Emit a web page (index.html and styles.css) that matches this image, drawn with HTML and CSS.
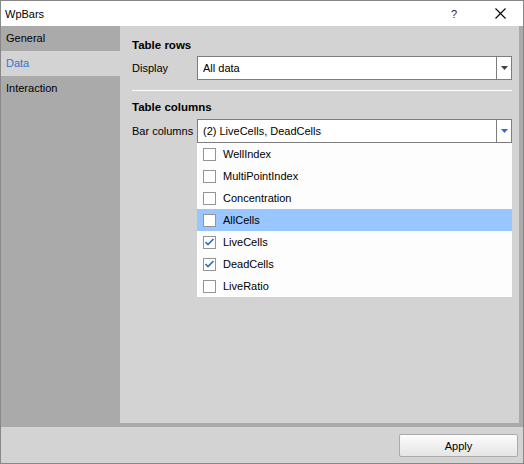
FILE: index.html
```html
<!DOCTYPE html>
<html>
<head>
<meta charset="utf-8">
<link rel="stylesheet" href="styles.css">
</head>
<body>
<div class="window">
  <div class="titlebar">
    <span class="title">WpBars</span>
    <span class="help">?</span>
    <span class="close">
      <svg width="11" height="11" viewBox="0 0 11 11"><path d="M0.5 0.5 L10.5 10.5 M10.5 0.5 L0.5 10.5" stroke="#000" stroke-width="1.1" fill="none"/></svg>
    </span>
  </div>
  <div class="body">
    <nav class="nav">
      <div class="nav-item">General</div>
      <div class="nav-item active">Data</div>
      <div class="nav-item">Interaction</div>
    </nav>
    <main class="content">
      <div class="heading">Table rows</div>
      <div class="row">
        <span class="label">Display</span>
        <div class="combo">
          <span class="combo-text">All data</span>
          <span class="combo-btn">
            <svg width="7" height="4" viewBox="0 0 7 4"><path d="M0 0 H7 L3.5 4 Z" fill="#404040"/></svg>
          </span>
        </div>
      </div>
      <div class="sep"></div>
      <div class="heading heading-cols">Table columns</div>
      <div class="row">
        <span class="label">Bar columns</span>
        <div class="combo">
          <span class="combo-text">(2) LiveCells, DeadCells</span>
          <span class="combo-btn">
            <svg width="7" height="4" viewBox="0 0 7 4"><path d="M0 0 H7 L3.5 4 Z" fill="#2d6fcc"/></svg>
          </span>
          <ul class="popup">
            <li class="opt"><span class="box"></span>WellIndex</li>
            <li class="opt"><span class="box"></span>MultiPointIndex</li>
            <li class="opt"><span class="box"></span>Concentration</li>
            <li class="opt hover"><span class="box"></span>AllCells</li>
            <li class="opt"><span class="box"><svg width="11" height="11" viewBox="0 0 11 11"><path d="M1.5 5 L4 7.5 L9.5 2" stroke="#2a6fcf" stroke-width="1.7" fill="none"/></svg></span>LiveCells</li>
            <li class="opt"><span class="box"><svg width="11" height="11" viewBox="0 0 11 11"><path d="M1.5 5 L4 7.5 L9.5 2" stroke="#2a6fcf" stroke-width="1.7" fill="none"/></svg></span>DeadCells</li>
            <li class="opt"><span class="box"></span>LiveRatio</li>
          </ul>
        </div>
      </div>
    </main>
  </div>
  <div class="footer">
    <button class="apply">Apply</button>
  </div>
</div>
</body>
</html>
```

FILE: styles.css
```css
* { box-sizing: border-box; }
html, body { margin: 0; padding: 0; }
body {
  font-family: "Liberation Sans", Arial, sans-serif;
  font-size: 11px;
  color: #000;
  background: #fff;
}
.window {
  width: 524px;
  height: 464px;
  border: 1px solid #888;
  display: flex;
  flex-direction: column;
}
.titlebar {
  height: 25px;
  background: #fff;
  display: flex;
  align-items: center;
  padding-left: 4px;
}
.title { font-size: 11px; flex: 1; }
.help {
  width: 30px;
  margin-right: 8px;
  text-align: center;
  font-size: 11px;
  color: #1b1b3a;
}
.close {
  width: 46px;
  height: 25px;
  display: flex;
  align-items: center;
  justify-content: center;
}
.body {
  height: 401px;
  background: #aaa;
  display: flex;
  padding: 0 4px 4px 0;
}
.nav {
  width: 119px;
  background: #aaa;
}
.nav-item {
  height: 25px;
  line-height: 25px;
  padding-left: 5px;
}
.nav-item.active {
  background: #d3d3d3;
  color: #3375d2;
}
.content {
  flex: 1;
  background: #d3d3d3;
  padding: 10px 7px 0 12px;
}
.heading {
  font-weight: bold;
  font-size: 11.5px;
  line-height: 18px;
  height: 18px;
}
.heading-cols { margin-top: 7px; }
.row {
  display: flex;
  align-items: center;
  height: 24px;
  margin-top: 2px;
}
.heading-cols + .row { margin-top: 3px; }
.label { width: 65px; }
.combo {
  position: relative;
  flex: 1;
  height: 24px;
  border: 1px solid #7d7d7d;
  background: #fff;
  display: flex;
  align-items: center;
}
.combo-text { flex: 1; padding-left: 5px; }
.combo-btn {
  width: 15px;
  height: 22px;
  border-left: 1px solid #7d7d7d;
  display: flex;
  align-items: center;
  justify-content: center;
}
.sep {
  height: 1px;
  background: #fff;
  margin-top: 10px;
}
.popup {
  position: absolute;
  top: calc(100% + 1px);
  left: -1px;
  right: -1px;
  margin: 0;
  padding: 0;
  list-style: none;
  background: #fdfdfd;
}
.opt {
  height: 22px;
  display: flex;
  align-items: center;
  padding-left: 6px;
}
.opt.hover { background: #99c6ff; }
.box {
  width: 13px;
  height: 13px;
  border: 1px solid #949494;
  background: #fff;
  margin-right: 7px;
  display: flex;
}
.footer {
  height: 36px;
  background: #d3d3d3;
  display: flex;
  justify-content: flex-end;
  align-items: flex-start;
  padding: 7px 5px 0 0;
}
.apply {
  width: 119px;
  height: 23px;
  border: 1px solid #ababab;
  border-radius: 2px;
  background: linear-gradient(#fcfcfc, #e5e5e5);
  font-family: "Liberation Sans", Arial, sans-serif;
  font-size: 11px;
  color: #000;
  padding: 0;
}
```
